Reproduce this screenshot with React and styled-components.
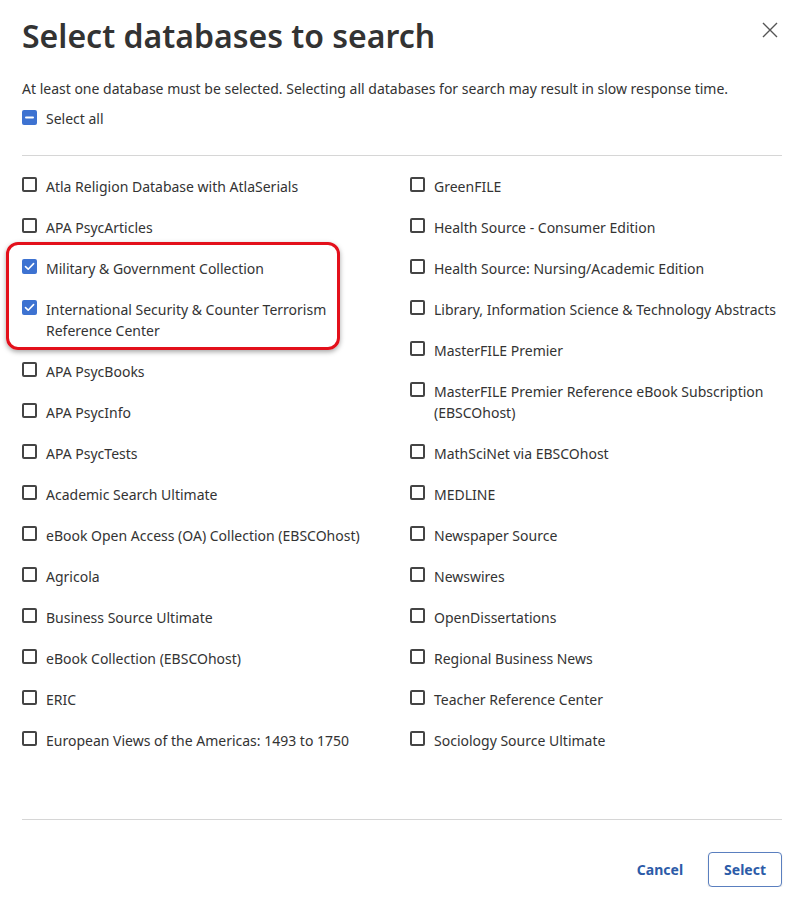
import React from 'react'
import styled, { createGlobalStyle } from 'styled-components'

const GlobalStyle = createGlobalStyle`
    body {
        margin: 0;
        background: #ffffff;
        font-family: "Noto Sans", "Open Sans", sans-serif;
        color: #333333;
    }
`

const Dialog = styled.div`
    width: 803px;
    box-sizing: border-box;
    padding: 0 21px 0 22px;
`

const Header = styled.div`
    display: flex;
    justify-content: space-between;
    align-items: flex-start;
    padding-top: 15px;
`

const Title = styled.h1`
    margin: 0;
    font-size: 32px;
    line-height: 42px;
    font-weight: 600;
    color: #333333;
`

const CloseButton = styled.button`
    border: none;
    background: none;
    padding: 0;
    margin: 3px 0 0 0;
    width: 24px;
    height: 24px;
    display: flex;
    align-items: center;
    justify-content: center;
    cursor: pointer;
`

const Note = styled.p`
    margin: 22px 0 0;
    font-size: 14px;
    line-height: 20px;
`

const Divider = styled.hr`
    border: none;
    border-top: 1px solid #d6d6d6;
    margin: ${({ gap }) => gap || '0'};
`

const Columns = styled.div`
    display: grid;
    grid-template-columns: 364px 1fr;
    column-gap: 24px;
    margin-top: 20px;
`

const Column = styled.div`
    position: relative;
    display: flex;
    flex-direction: column;
`

const Option = styled.label`
    display: flex;
    align-items: flex-start;
    gap: 9px;
    font-size: 14px;
    line-height: ${({ tight }) => tight ? '20px' : '21px'};
    color: #333333;
    padding-bottom: ${({ last }) => last ? '0' : '20px'};
    cursor: pointer;
`

const Box = styled.span`
    flex: none;
    width: 15px;
    height: 15px;
    box-sizing: border-box;
    margin-top: 1px;
    border-radius: 2px;
    border: ${({ on }) => on ? 'none' : '2px solid #444444'};
    background: ${({ on }) => on ? '#3d72d1' : '#ffffff'};
    display: flex;
    align-items: center;
    justify-content: center;
`

const Highlight = styled.div`
    position: absolute;
    left: -16px;
    top: 66px;
    width: 334px;
    height: 108px;
    box-sizing: border-box;
    border: 3px solid #e3101b;
    border-radius: 12px;
    box-shadow: 0 2px 5px rgba(0, 0, 0, 0.35);
    pointer-events: none;
`

const Footer = styled.div`
    display: flex;
    justify-content: flex-end;
    align-items: center;
    gap: 8px;
    padding-top: 32px;
`

const FooterButton = styled.button`
    font-family: "Noto Sans", "Open Sans", sans-serif;
    font-size: 14px;
    font-weight: 700;
    color: #2c5ba8;
    background: #ffffff;
    height: 35px;
    padding: 0 ${({ outlined }) => outlined ? '15px' : '16px'};
    border: 1px solid ${({ outlined }) => outlined ? '#5a7fbf' : 'transparent'};
    border-radius: 4px;
    box-shadow: ${({ outlined }) => outlined ? '0 1px 2px rgba(0,0,0,0.12)' : 'none'};
    cursor: pointer;
`

const left = [
    ['Atla Religion Database with AtlaSerials'],
    ['APA PsycArticles'],
    ['Military & Government Collection', true],
    ['International Security & Counter Terrorism Reference Center', true],
    ['APA PsycBooks'],
    ['APA PsycInfo'],
    ['APA PsycTests'],
    ['Academic Search Ultimate'],
    ['eBook Open Access (OA) Collection (EBSCOhost)'],
    ['Agricola'],
    ['Business Source Ultimate'],
    ['eBook Collection (EBSCOhost)'],
    ['ERIC'],
    ['European Views of the Americas: 1493 to 1750'],
]

const right = [
    ['GreenFILE'],
    ['Health Source - Consumer Edition'],
    ['Health Source: Nursing/Academic Edition'],
    ['Library, Information Science & Technology Abstracts'],
    ['MasterFILE Premier'],
    ['MasterFILE Premier Reference eBook Subscription (EBSCOhost)'],
    ['MathSciNet via EBSCOhost'],
    ['MEDLINE'],
    ['Newspaper Source'],
    ['Newswires'],
    ['OpenDissertations'],
    ['Regional Business News'],
    ['Teacher Reference Center'],
    ['Sociology Source Ultimate'],
]

const Check = () => (
    <svg width="11" height="9" viewBox="0 0 11 9">
        <path d="M1.5 4.6 L4.2 7.2 L9.6 1.6" fill="none" stroke="#ffffff" strokeWidth="1.6" strokeLinecap="round" strokeLinejoin="round" />
    </svg>
)

const Dash = () => (
    <svg width="9" height="3" viewBox="0 0 9 3">
        <path d="M1 1.5 H8" stroke="#ffffff" strokeWidth="2" strokeLinecap="round" />
    </svg>
)

const Checkbox = ({ state }) => (
    <Box on={state ? 1 : 0}>
        {state === 'checked' && <Check />}
        {state === 'mixed' && <Dash />}
    </Box>
)

const OptionList = ({ items, highlight }) => (
    <Column>
        {items.map(([name, checked], i) => (
            <Option key={name} last={i === items.length - 1 ? 1 : 0}>
                <Checkbox state={checked ? 'checked' : null} />
                <span>{name}</span>
            </Option>
        ))}
        {highlight && <Highlight />}
    </Column>
)

const App = () => (
    <>
        <GlobalStyle />
        <Dialog>
            <Header>
                <Title>Select databases to search</Title>
                <CloseButton aria-label="Close">
                    <svg width="16" height="16" viewBox="0 0 16 16">
                        <path d="M1 1 L15 15 M15 1 L1 15" stroke="#555555" strokeWidth="1.4" />
                    </svg>
                </CloseButton>
            </Header>
            <Note>At least one database must be selected. Selecting all databases for search may result in slow response time.</Note>
            <Option last={1} tight={1} style={{ marginTop: '10px' }}>
                <Checkbox state="mixed" />
                <span>Select all</span>
            </Option>
            <Divider gap="26px 0 0" />
            <Columns>
                <OptionList items={left} highlight />
                <OptionList items={right} />
            </Columns>
            <Divider gap="68px 0 0" />
            <Footer>
                <FooterButton>Cancel</FooterButton>
                <FooterButton outlined>Select</FooterButton>
            </Footer>
        </Dialog>
    </>
)

export default App
